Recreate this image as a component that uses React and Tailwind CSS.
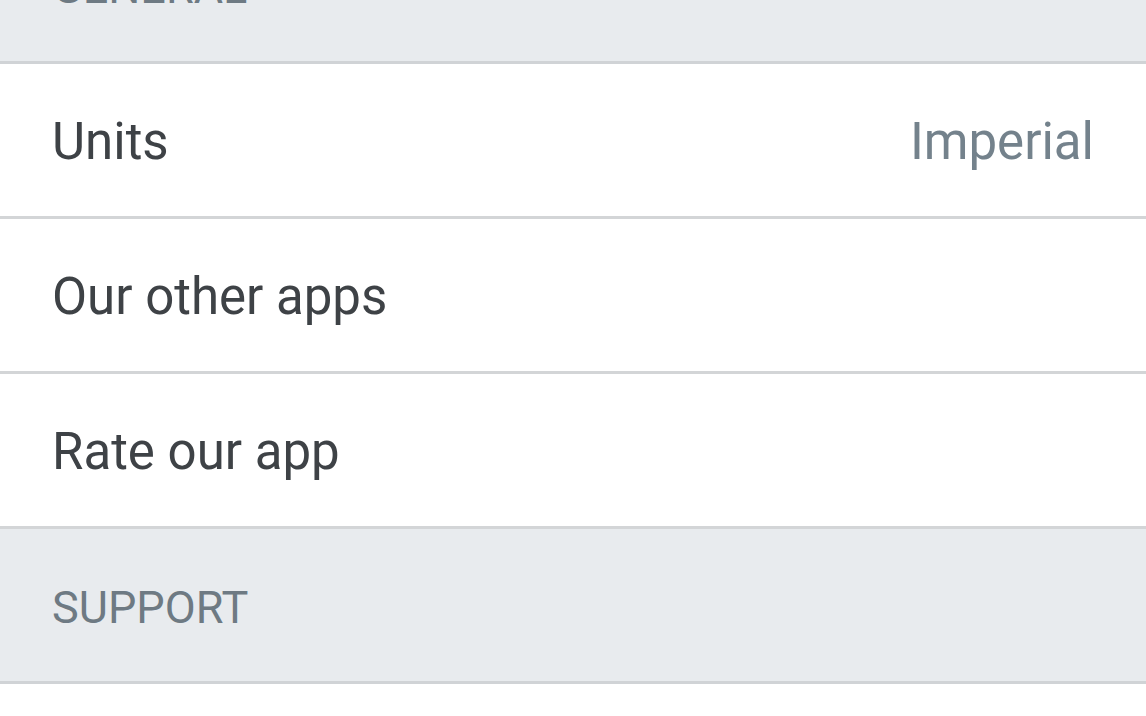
export default function App() {
  const font = { fontFamily: "Roboto, 'Noto Sans', sans-serif" };
  return (
    <div className="w-[1146px] h-[716px] overflow-hidden bg-white" style={font}>
      <div className="mt-[-91px] flex flex-col">
        <div className="h-[155px] bg-[#e8ebee] border-b-[3px] border-[#d0d3d6] flex items-center px-[52px] pt-[4px]">
          <span className="text-[45px] leading-none text-[#6e7a83]">GENERAL</span>
        </div>
        <div className="h-[155px] bg-white border-b-[3px] border-[#d3d5d7] flex items-center justify-between pl-[52px] pr-[52px] pt-[3px]">
          <span className="text-[51px] leading-none text-[#3e4246]">Units</span>
          <span className="text-[51px] leading-none text-[#74828c]">Imperial</span>
        </div>
        <div className="h-[155px] bg-white border-b-[3px] border-[#d3d5d7] flex items-center px-[52px] pt-[3px]">
          <span className="text-[51px] leading-none text-[#3e4246]">Our other apps</span>
        </div>
        <div className="h-[155px] bg-white border-b-[3px] border-[#d3d5d7] flex items-center px-[52px] pt-[3px]">
          <span className="text-[51px] leading-none text-[#3e4246]">Rate our app</span>
        </div>
        <div className="h-[155px] bg-[#e8ebee] border-b-[3px] border-[#d0d3d6] flex items-center px-[52px] pt-[4px]">
          <span className="text-[45px] leading-none text-[#6e7a83]">SUPPORT</span>
        </div>
        <div className="h-[155px] bg-white" />
      </div>
    </div>
  );
}
